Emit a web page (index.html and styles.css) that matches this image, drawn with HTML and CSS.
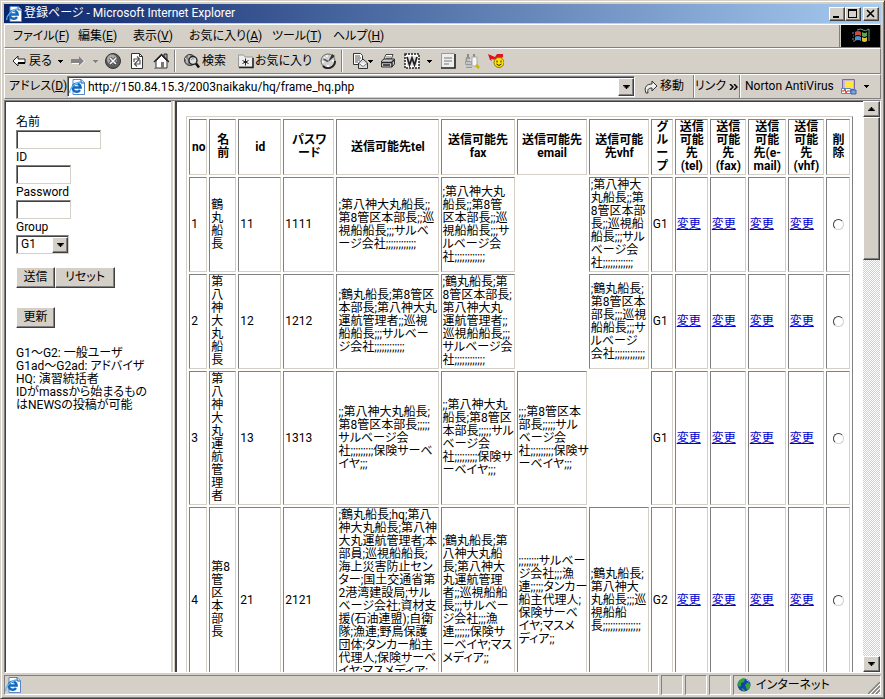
FILE: index.html
```html
<!DOCTYPE html>
<html lang="ja">
<head>
<meta charset="utf-8">
<title>登録ページ</title>
<link rel="stylesheet" href="styles.css">
</head>
<body>
<svg class="defs" aria-hidden="true">
  <symbol id="ie" viewBox="0 0 16 16">
    <path d="M4 .5h8l3.500 3v12H4z" fill="#fff" stroke="#5a86c8"/>
    <path d="M12 .5v3.500h3.500" fill="#cfe0f8" stroke="#31599c"/>
    <path d="M11 11a4 4 0 1 1 .7-2.500H4" fill="none" stroke="#1467bd" stroke-width="2.400"/>
    <path d="M1 14C-.5 11 6 3 12 3" fill="none" stroke="#58b4ea" stroke-width="1.300"/>
    <path d="M5.500 5.500Q7 4.300 9 5" fill="none" stroke="#8ad3f6"/>
  </symbol>
  <symbol id="caret" viewBox="0 0 5 3"><path d="M0 0h5v1H4v1H3v1H2V2H1V1H0z" fill="currentColor"/></symbol>
</svg>

<div class="window">
  <header class="titlebar">
    <svg class="icon"><use href="#ie"/></svg>
    <h1>登録ページ - Microsoft Internet Explorer</h1>
    <div class="winbuttons">
      <button class="raised" aria-label="最小化"><svg viewBox="0 0 12 10"><path d="M2 7h6v2H2z"/></svg></button>
      <button class="raised" aria-label="最大化"><svg viewBox="0 0 12 10"><path d="M1 0h9v9H1zM2 2v6h7V2z" fill-rule="evenodd"/></svg></button>
      <button class="raised close" aria-label="閉じる"><svg viewBox="0 0 12 10"><path d="M2 1l7 7M9 1L2 8" stroke="#000" stroke-width="1.600"/></svg></button>
    </div>
  </header>

  <div class="menurow">
    <nav class="menu">
      <a href="#file">ファイル(<u>F</u>)</a>
      <a href="#edit">編集(<u>E</u>)</a>
      <a href="#view">表示(<u>V</u>)</a>
      <a href="#fav">お気に入り(<u>A</u>)</a>
      <a href="#tools">ツール(<u>T</u>)</a>
      <a href="#help">ヘルプ(<u>H</u>)</a>
    </nav>
    <div class="brand">
      <svg viewBox="0 0 18 16">
        <path d="M3 4q3-2 6 0v4q-3-2-6 0z" fill="#c84a3a"/>
        <path d="M10 4q3 2 5 0v4q-3 2-5 0z" fill="#5aa84a"/>
        <path d="M3 9q3-2 6 0v4q-3-2-6 0z" fill="#4a8fd0"/>
        <path d="M10 9q3 2 5 0v4q-3 2-5 0z" fill="#e0c040"/>
        <path d="M5 2q4-2 6 0t6-1v12" fill="none" stroke="#6f9c90"/>
        <path d="M0 5h2M1 8h1M0 11h2M1 13h2" stroke="#7c8ba0"/>
      </svg>
    </div>
  </div>

  <div class="toolbar">
    <button class="tool back"><svg class="arrow" viewBox="0 0 14 12"><path d="M6 1L1 6l5 5V8h7V4H6z" fill="#fff" stroke="#222"/><path d="M6 8h7" stroke="#000" stroke-width="2"/></svg>戻る<svg class="caret"><use href="#caret"/></svg></button>
    <button class="tool forward" aria-label="進む"><svg class="arrow" viewBox="0 0 14 12"><path d="M8 1l6 5-6 6V9H1V4h7z" fill="#fff"/><path d="M8 1l5 5-5 5V8H0V4h8z" fill="#858585"/></svg><svg class="caret"><use href="#caret"/></svg></button>
    <button class="tool" aria-label="中止"><svg class="icon" viewBox="0 0 16 16"><circle cx="8" cy="8" r="7.500" fill="#5c5c5c" stroke="#333"/><circle cx="7" cy="6.500" r="5" fill="#aaa"/><path d="M5 5l6 6M11 5l-6 6" stroke="#333" stroke-width="3"/><path d="M5 5l6 6M11 5l-6 6" stroke="#fff" stroke-width="1.600"/></svg></button>
    <button class="tool" aria-label="更新"><svg class="icon" viewBox="0 0 16 16"><path d="M2.500.5h8l3 3v12h-11z" fill="#fff" stroke="#333"/><path d="M10.500.5v3h3" fill="none" stroke="#333"/><path d="M5 9V6h5M8 3.500L10.500 6 8 8.500M11 7v4H6M8 8.500L5.500 11 8 13.500" fill="none" stroke="#555" stroke-width="1.200"/></svg></button>
    <button class="tool" aria-label="ホーム"><svg class="icon" viewBox="0 0 16 16"><path d="M11 1h3v6h-3z" fill="#aaa" stroke="#222"/><path d="M3 8v7h11V8L8.500 2.500z" fill="#fff" stroke="#333"/><path d="M1 9l7.500-7.500L16 9" fill="none" stroke="#222" stroke-width="1.400"/><path d="M8 9h3v6H8z" fill="#777"/><path d="M1 15.500h5" stroke="#888"/></svg></button>
    <span class="sep"></span>
    <button class="tool search"><svg class="icon" viewBox="0 0 16 16"><circle cx="6" cy="7" r="5.500" fill="#888" stroke="#333"/><path d="M1 5q3 1 2 5M5 2v3" stroke="#ddd" fill="none"/><circle cx="9" cy="7.500" r="4" fill="#ddd" stroke="#222" stroke-width="1.400"/><path d="M12 10.500l3 4" stroke="#111" stroke-width="2.500"/><path d="M7 7q1-2 3-1" stroke="#888" fill="none"/></svg>検索</button>
    <button class="tool favorites"><svg class="icon" viewBox="0 0 16 16"><path d="M.5 3.500V2h5l1.500 2h8v10H.5z" fill="#eee" stroke="#999"/><path d="M15 5v9.500H1" fill="none" stroke="#222" stroke-width="1.500"/><path d="M7.500 5.500v7M4.500 7.500l6 3M10.500 7.500l-6 3" stroke="#222"/></svg>お気に入り</button>
    <button class="tool" aria-label="履歴"><svg class="icon" viewBox="0 0 16 16"><circle cx="8" cy="8" r="7" fill="#d0d0d0" stroke="#666"/><path d="M3 13a7 7 0 0 0 12-5" fill="none" stroke="#222" stroke-width="2"/><path d="M8 9l4-8 3 2z" fill="#333"/><path d="M8 8.500L3.500 6" stroke="#555" stroke-width="1.500"/><path d="M2 9h2M7 2v2M8 12v2M12 8h2M4 4l1 1" stroke="#fff" stroke-width="1.500"/></svg></button>
    <span class="sep"></span>
    <button class="tool mail" aria-label="メール"><svg class="icon" viewBox="0 0 16 16"><path d="M1.500.5h7l2 2v9h-9z" fill="#fff" stroke="#333"/><path d="M3 3h5M3 5h6M3 7h5M3 9h3" stroke="#555"/><path d="M6.500 10L11 6l4.500 4v5.500h-9z" fill="#ddd" stroke="#333"/><path d="M7 10.500l4 3 4-3" fill="#fff" stroke="#777"/></svg><svg class="caret"><use href="#caret"/></svg></button>
    <button class="tool" aria-label="印刷"><svg class="icon" viewBox="0 0 16 16"><path d="M4 6l2-4.500h7L11 7z" fill="#fff" stroke="#444"/><path d="M6 4h5M6 5.500h5" stroke="#777"/><path d="M1.500 8L4 6h10.500v5L12 14H1.500z" fill="#ccc" stroke="#333"/><path d="M2 9.500h9.500L14 7M12 10v4M3 12h7" fill="none" stroke="#222" stroke-width="1.400"/></svg></button>
    <button class="tool word" aria-label="Word で編集"><svg class="icon" viewBox="0 0 16 16"><path d="M1 1h14v14H1z" fill="#fff" stroke="#222" stroke-width="1.500" stroke-dasharray="2 1"/><path d="M3 3.500h10v9H3z" fill="#ddd"/><path d="M3 4l2.500 8L8 5l2.500 7L13 4" fill="none" stroke="#222" stroke-width="1.800"/></svg><svg class="caret"><use href="#caret"/></svg></button>
    <button class="tool" aria-label="編集"><svg class="icon" viewBox="0 0 16 16"><path d="M2 1h12v14H2z" fill="#eee"/><path d="M1.500 14.500V.5h13" fill="none" stroke="#999"/><path d="M15 1v14H1" fill="none" stroke="#222" stroke-width="1.600"/><path d="M4 5h8M4 8h8M4 11h5" stroke="#777"/></svg></button>
    <button class="tool" aria-label="ディスカッション"><svg class="icon" viewBox="0 0 16 16"><path d="M2 4h4v4h2v7H2l-1-5z" fill="#999"/><path d="M3 1h2v3H3zM9 1h2v3H9z" fill="#888"/><path d="M1 13h9M2 10h5M3 7h4" stroke="#eee"/><path d="M8 4h5v9H8z" fill="#f6f6f6" stroke="#aaa"/><path d="M12 12l3 3" stroke="#c8b800" stroke-width="2.500"/></svg></button>
    <button class="tool" aria-label="メッセンジャー"><svg class="icon" viewBox="0 0 16 16"><path d="M0 1l7 3 2-3h6v3L9 7 3 6l1 2-2-1z" fill="#e1141c"/><circle cx="11" cy="9.500" r="5" fill="#ffe000" stroke="#8a7a00"/><path d="M9 7.500v2M13 7.500v2M8.500 11q2.500 3 5 0" fill="none" stroke="#222"/></svg></button>
  </div>

  <div class="addressrow">
    <label for="address">アドレス(<u>D</u>)</label>
    <div class="combo">
      <svg class="icon"><use href="#ie"/></svg>
      <input id="address" value="http://150.84.15.3/2003naikaku/hq/frame_hq.php">
      <button class="raised" aria-label="アドレス一覧"><svg class="caret wide"><use href="#caret"/></svg></button>
    </div>
    <button class="tool go"><svg class="go-arrow" viewBox="0 0 14 14"><path d="M2 13C-.5 7 3 4 8 4V1l5 5-5 5V8C5 8 3 9 4 13z" fill="#eee" stroke="#333"/></svg>移動</button>
    <button class="tool links">リンク<svg class="chevrons" viewBox="0 0 9 6"><path d="M1 0l3 3-3 3M5 0l3 3-3 3" fill="none" stroke="#000" stroke-width="1.500"/></svg></button>
    <button class="tool norton">Norton AntiVirus<svg class="icon" viewBox="0 0 16 16"><path d="M1.500.5h12v10h-12z" fill="#c9b7dd" stroke="#7b6aa0"/><path d="M4 2h8v7H4z" fill="#ffe838"/><path d="M.5 9.500h9v5h-9z" fill="#fff" stroke="#5788c8"/><path d="M1 12h2l1-2 1 4 1-2h3" fill="none" stroke="#e02020"/><path d="M10 11h5v4h-5z" fill="#7aa4dc" stroke="#4460a0"/></svg><svg class="caret"><use href="#caret"/></svg></button>
  </div>

  <div class="frames">
    <aside class="side">
      <form>
        <label for="name">名前</label>
        <input id="name" class="box long">
        <label for="uid">ID</label>
        <input id="uid" class="box">
        <label for="pw">Password</label>
        <input id="pw" class="box" type="password">
        <label for="group">Group</label>
        <div class="select">
          <select id="group"><option>G1</option></select>
          <span class="drop raised"><svg class="caret wide"><use href="#caret"/></svg></span>
        </div>
        <div class="actions"><button type="button" class="raised push">送信</button><button type="reset" class="raised push reset">リセット</button></div>
        <div class="actions update"><button type="button" class="raised push">更新</button></div>
      </form>
      <p>G1～G2: 一般ユーザ<br>G1ad～G2ad: アドバイザ<br>HQ: 演習統括者<br>IDがmassから始まるもの<br>はNEWSの投稿が可能</p>
    </aside>
    <div class="divider"></div>
    <main class="list">
      <table>
        <colgroup>
          <col class="c-no"><col class="c-name"><col class="c-id"><col class="c-pass"><col class="c-tel"><col class="c-fax"><col class="c-email"><col class="c-vhf"><col class="c-group"><col class="c-etel"><col class="c-efax"><col class="c-eemail"><col class="c-efax"><col class="c-del">
        </colgroup>
        <thead>
          <tr><th>no</th><th>名<br>前</th><th>id</th><th>パスワ<br>ード</th><th>送信可能先tel</th><th>送信可能先<br>fax</th><th>送信可能先<br>email</th><th>送信可能<br>先vhf</th><th>グ<br>ル<br>ー<br>プ</th><th>送信<br>可能<br>先<br>(tel)</th><th>送信<br>可能<br>先<br>(fax)</th><th>送信<br>可能<br>先(e-<br>mail)</th><th>送信<br>可能<br>先<br>(vhf)</th><th>削<br>除</th></tr>
        </thead>
        <tbody>
          <tr>
            <td>1</td><td>鶴<br>丸<br>船<br>長</td><td>11</td><td>1111</td>
            <td>;第八神大丸船長;;<br>第8管区本部長;;巡<br>視船船長;;;サルベ<br>ージ会社;;;;;;;;;;;;</td>
            <td>;第八神大丸<br>船長;;第8管<br>区本部長;;巡<br>視船船長;;;サ<br>ルベージ会<br>社;;;;;;;;;;;;</td>
            <td></td>
            <td>;第八神大<br>丸船長;;第<br>8管区本部<br>長;;巡視船<br>船長;;;サル<br>ベージ会<br>社;;;;;;;;;;;;</td>
            <td>G1</td><td><a href="#t1">変更</a></td><td><a href="#f1">変更</a></td><td><a href="#e1">変更</a></td><td><a href="#v1">変更</a></td><td class="pick"><input type="radio" name="del" aria-label="1を削除"></td>
          </tr>
          <tr>
            <td>2</td><td>第<br>八<br>神<br>大<br>丸<br>船<br>長</td><td>12</td><td>1212</td>
            <td>;鶴丸船長;第8管区<br>本部長;第八神大丸<br>運航管理者;;巡視<br>船船長;;;サルベー<br>ジ会社;;;;;;;;;;;;</td>
            <td>;鶴丸船長;第<br>8管区本部長;<br>第八神大丸<br>運航管理者;;<br>巡視船船長;;;<br>サルベージ会<br>社;;;;;;;;;;;;</td>
            <td></td>
            <td>;鶴丸船長;<br>第8管区本<br>部長;;;巡視<br>船船長;;;サ<br>ルベージ<br>会社;;;;;;;;;;;;</td>
            <td>G1</td><td><a href="#t2">変更</a></td><td><a href="#f2">変更</a></td><td><a href="#e2">変更</a></td><td><a href="#v2">変更</a></td><td class="pick"><input type="radio" name="del" aria-label="2を削除"></td>
          </tr>
          <tr>
            <td>3</td><td>第<br>八<br>神<br>大<br>丸<br>運<br>航<br>管<br>理<br>者</td><td>13</td><td>1313</td>
            <td>;;第八神大丸船長;<br>第8管区本部長;;;;;<br>サルベージ会<br>社;;;;;;;;;保険サーベ<br>イヤ;;;</td>
            <td>;;第八神大丸<br>船長;第8管区<br>本部長;;;;;サル<br>ベージ会<br>社;;;;;;;;;保険サ<br>ーベイヤ;;;</td>
            <td>;;;第8管区本<br>部長;;;;;サル<br>ベージ会<br>社;;;;;;;;;保険サ<br>ーベイヤ;;;</td>
            <td></td>
            <td>G1</td><td><a href="#t3">変更</a></td><td><a href="#f3">変更</a></td><td><a href="#e3">変更</a></td><td><a href="#v3">変更</a></td><td class="pick"><input type="radio" name="del" aria-label="3を削除"></td>
          </tr>
          <tr class="tall">
            <td>4</td><td>第8<br>管<br>区<br>本<br>部<br>長</td><td>21</td><td>2121</td>
            <td class="top">;鶴丸船長;hq;第八<br>神大丸船長;第八神<br>大丸運航管理者;本<br>部員;巡視船船長;<br>海上災害防止セン<br>ター;国土交通省第<br>2港湾建設局;サル<br>ベージ会社;資材支<br>援(石油連盟);自衛<br>隊;漁連;野鳥保護<br>団体;タンカー船主<br>代理人;保険サーベ<br>イヤ;マスメディア;</td>
            <td>;鶴丸船長;第<br>八神大丸船<br>長;第八神大<br>丸運航管理<br>者;;巡視船船<br>長;;;サルベー<br>ジ会社;;;漁<br>連;;;;;;保険サ<br>ーベイヤ;マス<br>メディア;;</td>
            <td>;;;;;;;;サルベー<br>ジ会社;;;漁<br>連;;;;;タンカー<br>船主代理人;<br>保険サーベ<br>イヤ;マスメ<br>ディア;;</td>
            <td>;鶴丸船長;<br>第八神大<br>丸船長;;;巡<br>視船船<br>長;;;;;;;;;;;;;;;</td>
            <td>G2</td><td><a href="#t4">変更</a></td><td><a href="#f4">変更</a></td><td><a href="#e4">変更</a></td><td><a href="#v4">変更</a></td><td class="pick"><input type="radio" name="del" aria-label="4を削除"></td>
          </tr>
        </tbody>
      </table>
    </main>
    <div class="scrollbar">
      <button class="raised" aria-label="上へ"><svg class="caret wide up"><use href="#caret"/></svg></button>
      <div class="thumb raised"></div>
      <div class="track"></div>
      <button class="raised" aria-label="下へ"><svg class="caret wide"><use href="#caret"/></svg></button>
    </div>
  </div>

  <footer class="status">
    <div class="pane main-pane"><svg class="icon"><use href="#ie"/></svg></div>
    <div class="pane"></div>
    <div class="pane"></div>
    <div class="pane"></div>
    <div class="pane zone">
      <svg class="globe" viewBox="0 0 14 14"><circle cx="7" cy="7" r="6.500" fill="#1540b0"/><path d="M2 3q3-4 6-2l-1 3-3 1v3l-2 1Q0 6 2 3zM8 7l3-3 2 2v4l-3 2zM4 10l3 1 1 2H6z" fill="#2fa62f"/><path d="M9 1.500l3 2" stroke="#7fc4ff"/></svg>
      <span>インターネット</span>
      <svg class="grip" viewBox="0 0 12 12"><path d="M0 12L12 0M4 12l8-8M8 12l4-4" stroke="#808080" stroke-width="1.500"/><path d="M2 12L12 2M6 12l6-6M10 12l2-2" stroke="#fff"/></svg>
    </div>
  </footer>
</div>
</body>
</html>
```
FILE: styles.css
```css
:root {
  --face: #d4d0c8;
  --shadow: #808080;
  --dark: #404040;
}

* { box-sizing: border-box; }

body {
  margin: 0;
  font: 12px/13px Roboto, "Noto Sans CJK JP", sans-serif;
  font-feature-settings: "palt";
  color: #000;
}

button, input, select {
  margin: 0;
  padding: 0;
  border: 0;
  border-radius: 0;
  background: none;
  font: inherit;
  font-feature-settings: inherit;
  color: inherit;
}

svg { display: block; flex: none; }
.defs { display: none; }
.icon { width: 16px; height: 16px; }
.caret { width: 5px; height: 3px; }
.caret.wide { width: 7px; height: 4px; }
.caret.up { transform: rotate(180deg); }

.window {
  display: flex;
  flex-direction: column;
  height: 100vh;
  padding: 3px;
  background: var(--face);
  border: 1px solid var(--face);
  border-right-color: var(--dark);
  border-bottom-color: var(--dark);
  box-shadow: inset 1px 1px #fff, inset -1px -1px var(--shadow);
}

.raised {
  display: flex;
  align-items: center;
  justify-content: center;
  background: var(--face);
  border: 1px solid;
  border-color: #fff var(--dark) var(--dark) #fff;
  box-shadow: inset -1px -1px var(--shadow);
}

/* title bar */
.titlebar {
  display: flex;
  align-items: center;
  gap: 2px;
  height: 19px;
  padding: 0 2px;
  background: linear-gradient(to right, #0a246a, #a6caf0);
}
.titlebar h1 {
  flex: 1;
  margin: 0;
  font-size: 12px;
  font-weight: 400;
  color: #fff;
}
.winbuttons { display: flex; }
.winbuttons button { width: 16px; height: 14px; }
.winbuttons .close { margin-left: 2px; }
.winbuttons svg { width: 12px; height: 10px; }

/* menu */
.menurow, .toolbar, .addressrow {
  display: flex;
  border: 1px solid;
  border-color: #fff var(--shadow) var(--shadow) #fff;
}
.menurow { height: 24px; margin-top: 1px; }
.menu {
  flex: 1;
  display: grid;
  grid-template-columns: 65px 55px 56px 83px 61px auto;
  align-items: center;
  padding-left: 8px;
  border-right: 1px solid var(--shadow);
}
.menu a { color: inherit; text-decoration: none; white-space: nowrap; }
.brand {
  display: flex;
  align-items: center;
  justify-content: center;
  width: 39px;
  margin-left: 1px;
  background: #000;
}
.brand svg { width: 18px; height: 16px; }

/* tool bar */
.toolbar { height: 26px; align-items: center; padding-left: 7px; }
.tool {
  display: flex;
  align-items: center;
  justify-content: center;
  width: 24px;
  white-space: nowrap;
}
.arrow { width: 14px; height: 12px; }
.back { width: 56px; justify-content: flex-start; gap: 3px; }
.back .caret { margin-left: 3px; }
.forward { width: 33px; gap: 8px; color: var(--shadow); }
.sep {
  width: 2px;
  height: 22px;
  margin: 0 6px 0 1px;
  border-left: 1px solid var(--shadow);
  border-right: 1px solid #fff;
}
.search { width: 56px; gap: 2px; justify-content: flex-start; padding-left: 2px; }
.favorites { width: 78px; gap: 1px; justify-content: flex-start; }
.mail { width: 27px; }
.word { width: 36px; gap: 7px; }

/* address bar */
.addressrow { height: 25px; align-items: center; padding-left: 4px; }
.addressrow label { width: 58px; white-space: nowrap; }
.combo {
  flex: 1;
  display: flex;
  align-items: center;
  gap: 3px;
  height: 21px;
  padding-left: 1px;
  background: #fff;
  border: 1px solid;
  border-color: var(--shadow) #fff #fff var(--shadow);
  box-shadow: inset 1px 1px var(--dark);
}
.combo input { flex: 1; min-width: 0; height: 17px; outline: 0; }
.combo button { width: 16px; height: 18px; }
.go { width: 58px; gap: 2px; }
.go-arrow { width: 14px; height: 14px; }
.links, .norton {
  height: 23px;
  border-left: 1px solid var(--shadow);
  box-shadow: inset 1px 0 #fff;
}
.links { width: 46px; gap: 3px; }
.chevrons { width: 9px; height: 6px; }
.norton { width: 141px; gap: 7px; justify-content: flex-start; padding-left: 5px; }

/* frames */
.frames {
  flex: 1;
  display: flex;
  min-height: 0;
  margin-top: 1px;
  background: #fff;
  border: 1px solid;
  border-color: var(--shadow) #fff #fff var(--shadow);
  box-shadow: inset 1px 1px var(--dark);
}
.side {
  flex: 0 0 19%;
  padding: 13px 0 0 11px;
  overflow: hidden;
}
.side label { display: block; line-height: 16px; }
.box {
  display: block;
  width: 55px;
  height: 19px;
  padding: 0 3px;
  border: 1px solid;
  border-color: var(--shadow) var(--face) var(--face) var(--shadow);
  box-shadow: inset 1px 1px var(--dark);
}
.box.long { width: 85px; }
.select {
  position: relative;
  width: 53px;
  height: 19px;
  border: 1px solid;
  border-color: var(--shadow) var(--face) var(--face) var(--shadow);
  box-shadow: inset 1px 1px var(--dark);
}
.select select { display: block; width: 100%; height: 17px; padding-left: 4px; appearance: none; }
.drop {
  position: absolute;
  top: 1px;
  right: 0;
  width: 16px;
  height: 16px;
  pointer-events: none;
}
.actions { display: flex; margin-top: 13px; }
.actions.update { margin-top: 19px; }
.push { width: 39px; height: 21px; }
.push.reset { width: 60px; }
.side p { margin: 19px 0 0; white-space: nowrap; }

.divider {
  width: 6px;
  background: var(--face);
  border-right: 2px solid var(--dark);
  box-shadow: inset 2px 0 var(--face), inset 3px 0 #fff;
}

.list {
  flex: 1;
  min-width: 0;
  padding: 15px 10px 0 9px;
  overflow: hidden;
}
table {
  width: 100%;
  table-layout: fixed;
  border-collapse: separate;
  border-spacing: 2px;
  border: 1px solid;
  border-color: var(--face) var(--shadow) var(--shadow) var(--face);
}
th, td {
  padding: 1px 0 1px 1px;
  border: 1px solid;
  border-color: var(--shadow) var(--face) var(--face) var(--shadow);
  white-space: nowrap;
}
td:empty { border-color: transparent; }
.top { vertical-align: top; }
.tall { height: 186px; }
table a { color: #0000cc; }

.c-no { width: 18px; }
.c-name { width: 27px; }
.c-id { width: 43px; }
.c-pass { width: 51px; }
.c-tel { width: 102px; }
.c-fax { width: 74px; }
.c-email { width: 70px; }
.c-vhf { width: 60px; }
.c-group { width: 22px; }
.c-etel { width: 33px; }
.c-efax { width: 36px; }
.c-eemail { width: 38px; }
.c-del { width: 24px; }

.pick { text-align: center; }
.pick input {
  display: block;
  width: 11px;
  height: 11px;
  margin: 0 auto;
  appearance: none;
  border: 1px solid;
  border-color: var(--dark) var(--face) var(--face) var(--dark);
  border-radius: 50%;
}

.scrollbar { display: flex; flex-direction: column; width: 17px; }
.scrollbar button { height: 16px; }
.thumb { flex: 0 0 25%; }
.track {
  flex: 1;
  background: repeating-conic-gradient(#fff 0 25%, var(--face) 0 50%) 0 0 / 2px 2px;
}

/* status bar */
.status { display: flex; gap: 2px; height: 22px; padding-top: 2px; }
.pane {
  display: flex;
  align-items: center;
  width: 22px;
  border: 1px solid;
  border-color: var(--shadow) #fff #fff var(--shadow);
}
.main-pane { flex: 1; }
.zone { width: 148px; gap: 5px; padding-left: 3px; }
.zone span { flex: 1; white-space: nowrap; }
.globe { width: 14px; height: 14px; }
.grip { width: 12px; height: 12px; align-self: flex-end; }
```
